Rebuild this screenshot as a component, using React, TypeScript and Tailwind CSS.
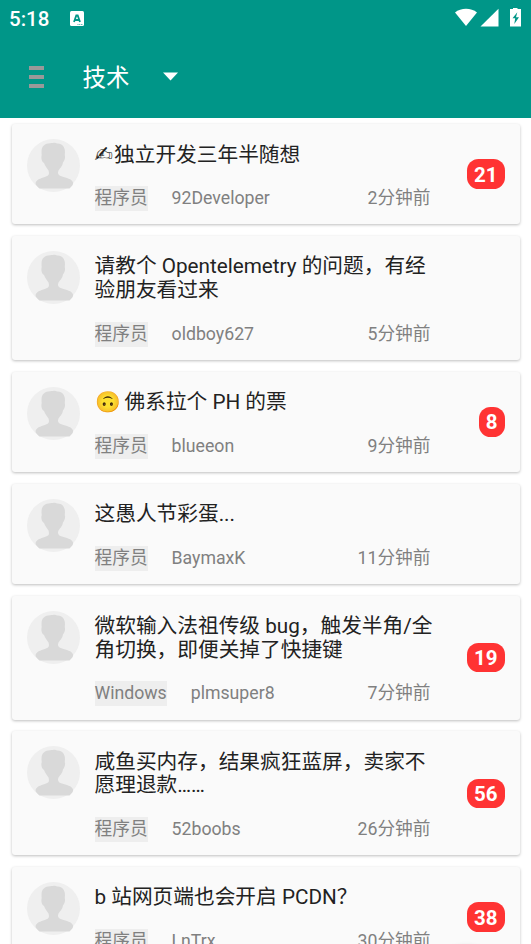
import React from 'react'

type Topic = {
  title: string[]
  node: string
  author: string
  time: string
  replies?: number
  icon?: 'pen' | 'face'
}

const topics: Topic[] = [
  { title: ['独立开发三年半随想'], node: '程序员', author: '92Developer', time: '2分钟前', replies: 21, icon: 'pen' },
  { title: ['请教个 Opentelemetry 的问题，有经', '验朋友看过来'], node: '程序员', author: 'oldboy627', time: '5分钟前' },
  { title: ['佛系拉个 PH 的票'], node: '程序员', author: 'blueeon', time: '9分钟前', replies: 8, icon: 'face' },
  { title: ['这愚人节彩蛋...'], node: '程序员', author: 'BaymaxK', time: '11分钟前' },
  { title: ['微软输入法祖传级 bug，触发半角/全', '角切换，即便关掉了快捷键'], node: 'Windows', author: 'plmsuper8', time: '7分钟前', replies: 19 },
  { title: ['咸鱼买内存，结果疯狂蓝屏，卖家不', '愿理退款……'], node: '程序员', author: '52boobs', time: '26分钟前', replies: 56 },
  { title: ['b 站网页端也会开启 PCDN？'], node: '程序员', author: 'LnTrx', time: '30分钟前', replies: 38 },
]

const Avatar = () => (
  <svg className="mt-[15px] ml-[15px] size-[53px] shrink-0" viewBox="0 0 53 53">
    <circle cx="26.5" cy="26.5" r="26.5" fill="#efefef" />
    <path
      d="M26 4C28 3.500 29 4.500 30 4.500C35 4 38 8 38 13C38 15 37.500 16 38 17C38.500 19.500 37 22 36 23.500C35.500 27 33 29 31.500 31.500C30 35 32 36.500 35 37.500C39 39 45 39.500 46.200 44C46 47 43.500 48 42.500 49.500H12.500C11 48 9 47 8.500 44C10 39.500 16 39 19 37.500C22 36.500 22.500 35 21.500 31.500C20 29 18 27 17 24C15 23 14 20 14.500 17C15 16 14.500 15 14.500 13C14.500 7 18 4.500 23 4.300C24 4 25 4 26 4Z"
      fill="#d9d9d9"
    />
  </svg>
)

const StatusBar = () => (
  <div className="flex h-9 items-center pl-[9px] text-white">
    <span className="w-[61px] pt-[2px] text-[20.5px] font-medium">5:18</span>
    <svg className="mt-[1px] h-[15px] w-[14px]" viewBox="0 0 14 15">
      <rect width="14" height="15" rx="1.500" fill="#fff" />
      <path d="M4 11L6.300 4.500H7.700L10 11M5 9H9" fill="none" stroke="#009688" strokeWidth="1.800" />
      <path d="M7.500 13.500H13" stroke="#009688" strokeWidth="0.700" strokeDasharray="1 0.700" />
    </svg>
    <svg className="ml-auto h-[20px] w-[76px]" viewBox="0 0 76 20" fill="#fff">
      <path d="M0 4.500C6 -0.500 16 -0.500 22 4.500L11 18Z" />
      <path d="M43.500 0.800V18.500H25.500Z" />
      <path d="M58 -0.500H62.500V1H66V18.500H55V1H58Z" />
      <path d="M62.300 4.200L57.500 10.300H60.200L59.300 16L64 9.200H61Z" fill="#009688" />
    </svg>
  </div>
)

const TopicCard = ({ topic }: { topic: Topic }) => (
  <div className="flex rounded-[3px] bg-[#fafafa] shadow-[0_1px_3px_rgba(0,0,0,0.26)]">
    <Avatar />
    <div className="w-[341px] shrink-0 pt-[19.4px] pb-[13.2px] pl-[15px]">
      <div className="text-[20.7px] leading-[23.7px] text-[#222]">
        {topic.title.map((line, i) => (
          <div key={line} className="h-[23.7px] whitespace-nowrap">
            {topic.icon === 'pen' && (
              <span className="inline-block w-[19.5px] font-['DejaVu_Sans'] text-[22px]">{'✍\uFE0E'}</span>
            )}
            {topic.icon === 'face' && i === 0 && (
              <span className="mr-[4px] inline-block w-[26px] text-[20.6px]">🙃</span>
            )}
            {line}
          </div>
        ))}
      </div>
      <div className="mt-[18.9px] flex h-[25px] w-[336px] items-center text-[17.7px] leading-[25px] whitespace-nowrap text-[#808080]">
        <span className="h-[25px] bg-[#eee]">{topic.node}</span>
        <span className="ml-[24px]">{topic.author}</span>
        <span className="ml-auto">{topic.time}</span>
      </div>
    </div>
    {topic.replies && (
      <div className="mr-[15px] ml-auto flex h-[29.5px] items-center self-center rounded-[11.5px] bg-[#ff3333] px-[7px] pt-[2px] text-[20.500px] leading-[27px] font-bold text-white">
        {topic.replies}
      </div>
    )}
  </div>
)

export default function App() {
  return (
    <div className="relative h-[944px] w-[531px] overflow-hidden bg-white font-[Roboto,'Noto_Sans_CJK_SC',sans-serif]">
      <header className="h-[118px] bg-[#009688]">
        <StatusBar />
        <div className="flex h-[82px] items-center pl-[29px] text-white">
          <div className="flex w-[15px] flex-col gap-[5px]">
            <span className="h-[4px] bg-[#999]" />
            <span className="h-[4px] bg-[#999]" />
            <span className="h-[4px] bg-[#999]" />
          </div>
          <span className="ml-[38.5px] pt-[3px] text-[23.500px]">技术</span>
          <svg className="mb-[2px] ml-[33px] h-[9px] w-[15px]" viewBox="0 0 15 9" fill="#fff">
            <path d="M0 0.500H15L7.500 8.500Z" />
          </svg>
        </div>
      </header>
      <main className="flex flex-col gap-[11.85px] pt-[6px] pr-[11.5px] pl-[11.5px]">
        {topics.map((topic) => (
          <TopicCard key={topic.author} topic={topic} />
        ))}
      </main>
      {/* top of the floating button's shadow */}
      <div className="absolute -bottom-[76px] left-[429px] size-[74px] rounded-full shadow-[0_0_5px_rgba(0,0,0,0.15)]" />
    </div>
  )
}
